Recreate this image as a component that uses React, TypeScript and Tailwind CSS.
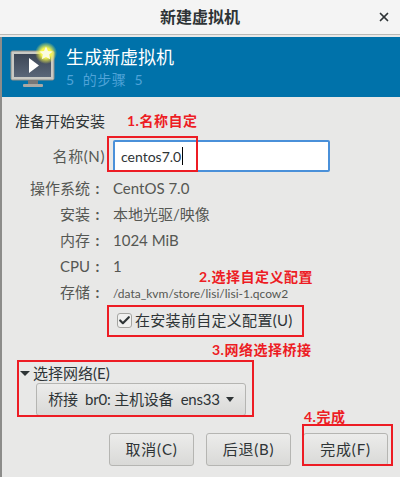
import { Check, X } from "lucide-react";

const cjk = "font-['Lato','Noto_Sans_CJK_SC',sans-serif]";

const rows = [
  { label: "操作系统", value: "CentOS 7.0" },
  { label: "安装", value: "本地光驱/映像" },
  { label: "内存", value: "1024 MiB" },
  { label: "CPU", value: "1" },
];

const buttons = ["取消(C)", "后退(B)", "完成(F)"];

function MonitorIcon() {
  return (
    <svg width="56" height="50" viewBox="0 0 56 50" className="shrink-0">
      <defs>
        <linearGradient id="screen" x1="0" y1="0" x2="0" y2="1">
          <stop offset="0" stopColor="#3c4656" />
          <stop offset="1" stopColor="#5a6678" />
        </linearGradient>
        <radialGradient id="glow">
          <stop offset="0.45" stopColor="#f6f64a" />
          <stop offset="1" stopColor="#f6f64a" stopOpacity="0" />
        </radialGradient>
      </defs>
      <rect x="1" y="9" width="43" height="29" rx="1.5" fill="#c9c9c4" stroke="#8d8d88" />
      <rect x="4" y="12" width="37" height="23" fill="url(#screen)" />
      <path d="M19 16 L19 31 L29 23.5 Z" fill="#fff" />
      <rect x="18" y="38" width="10" height="4" fill="#777" />
      <rect x="13" y="42" width="20" height="3" rx="1" fill="#a9a9a4" />
      <circle cx="36" cy="11" r="11" fill="url(#glow)" />
      <path d="M36 4.5 l2 4.4 4.7.5 -3.5 3.2 1 4.7 -4.2-2.4 -4.2 2.4 1-4.7 -3.5-3.2 4.7-.5 z" fill="#fbfbe0" />
    </svg>
  );
}

function InfoRow({ label, children }: { label: string; children: React.ReactNode }) {
  return (
    <div className="flex h-[26px] items-center text-[15px] text-[#555753]">
      <span className="w-[75px] text-right">{label}</span>
      <span className="w-[15px] text-center font-bold">:</span>
      <span className="ml-[8px]">{children}</span>
    </div>
  );
}

export default function App() {
  return (
    <div className={`relative h-[477px] w-[400px] overflow-hidden bg-[#e8e8e7] ${cjk}`}>
      <div className="relative flex h-[35px] items-center justify-center border-b border-[#b9b9b6] bg-[#f4f4f4]">
        <span className="text-[16px] font-bold text-[#2e3436]">新建虚拟机</span>
        <X className="absolute right-[9px] top-[10px] h-[14px] w-[14px] text-[#2e3436]" strokeWidth={3} />
      </div>

      <div className="border-l-2 border-[#8c8c8a]">
        <div className="mt-[2px] flex h-[60px] items-center bg-[#0072aa] pl-[8px]">
          <MonitorIcon />
          <div className="flex flex-col">
            <span className="text-[18px] leading-[26px] text-white">生成新虚拟机</span>
            <span className="whitespace-pre text-[14px] leading-[20px] tracking-[0.5px] text-[#4fa3d8]">5  的步骤  5</span>
          </div>
        </div>

        <div className="h-[380px] pl-[13px] pr-[12px]">
          <div className="mt-[14px] text-[15px] leading-[20px] text-[#2e3436]">准备开始安装</div>

          <div className="mt-[9px] flex items-center gap-[8px]">
            <span className="w-[90px] text-right text-[15px] tracking-[0.6px] text-[#555753]">名称(N)</span>
            <div className="flex h-[32px] w-[217px] items-center rounded-[2px] border-2 border-[#4a90d9] bg-white pl-[6px] text-[14px] text-[#2e3436]">
              centos7.0
              <span className="ml-[1px] h-[18px] w-px bg-black" />
            </div>
          </div>

          <div className="mt-[3px] flex flex-col">
            {rows.map((r) => (
              <InfoRow key={r.label} label={r.label}>
                {r.value}
              </InfoRow>
            ))}
            <InfoRow label="存储">
              <span className="text-[12px]">/data_kvm/store/lisi/lisi-1.qcow2</span>
            </InfoRow>
          </div>

          <div className="ml-[102px] mt-[3px] flex h-[24px] items-center gap-[3px] text-[15px] tracking-[0.3px] text-[#2e3436]">
            <span className="flex h-[15px] w-[15px] items-center justify-center rounded-[3px] border border-[#a5a5a2] bg-[#f0f0ef]">
              <Check className="h-[13px] w-[13px] text-[#2e3436]" strokeWidth={4} />
            </span>
            在安装前自定义配置(U)
          </div>

          <div className="mt-[31px] flex h-[20px] items-center text-[15px] text-[#2e3436]">
            <span className="ml-[5px] mr-[3px] h-0 w-0 border-x-[5px] border-t-[5px] border-x-transparent border-t-[#2e3436]" />
            选择网络(E)
          </div>

          <button className="ml-[21px] flex h-[33px] w-[210px] items-center justify-center gap-[6px] rounded-[3px] border border-[#b5b5b2] bg-gradient-to-b from-[#ececeb] to-[#d9d9d7] text-[15px] text-[#2e3436]">
            <span className="whitespace-pre tracking-[-0.2px]">桥接  br0: 主机设备  ens33</span>
            <span className="h-0 w-0 border-x-[4px] border-t-[5px] border-x-transparent border-t-[#2e3436]" />
          </button>

          <div className="mt-[17px] flex justify-end gap-[12px]">
            {buttons.map((b) => (
              <button
                key={b}
                className="h-[33px] w-[85px] rounded-[3px] border border-[#b5b5b2] bg-gradient-to-b from-[#ececeb] to-[#d9d9d7] text-[15px] tracking-[0.8px] text-[#2e3436]"
              >
                {b}
              </button>
            ))}
          </div>
        </div>
      </div>

      {/* red annotations drawn on top of the dialog */}
      <div className="absolute left-[107px] top-[136px] h-[36px] w-[91px] border-2 border-[#ed1c24]" />
      <div className="absolute left-[107px] top-[305px] h-[32px] w-[197px] border-2 border-[#ed1c24]" />
      <div className="absolute left-[17px] top-[360px] h-[57px] w-[237px] border-2 border-[#ed1c24]" />
      <div className="absolute left-[302px] top-[424px] h-[42px] w-[91px] border-2 border-[#ed1c24]" />
      <span className="absolute left-[127px] top-[112px] text-[14px] font-bold leading-[18px] tracking-[0.5px] text-[#ed1c24]">1.名称自定</span>
      <span className="absolute left-[199px] top-[268px] text-[14px] font-bold leading-[18px] tracking-[0.5px] text-[#ed1c24]">2.选择自定义配置</span>
      <span className="absolute left-[212px] top-[341px] text-[14px] font-bold leading-[18px] tracking-[0.5px] text-[#ed1c24]">3.网络选择桥接</span>
      <span className="absolute left-[304px] top-[408px] text-[14px] font-bold leading-[18px] tracking-[0.5px] text-[#ed1c24]">4.完成</span>
    </div>
  );
}
